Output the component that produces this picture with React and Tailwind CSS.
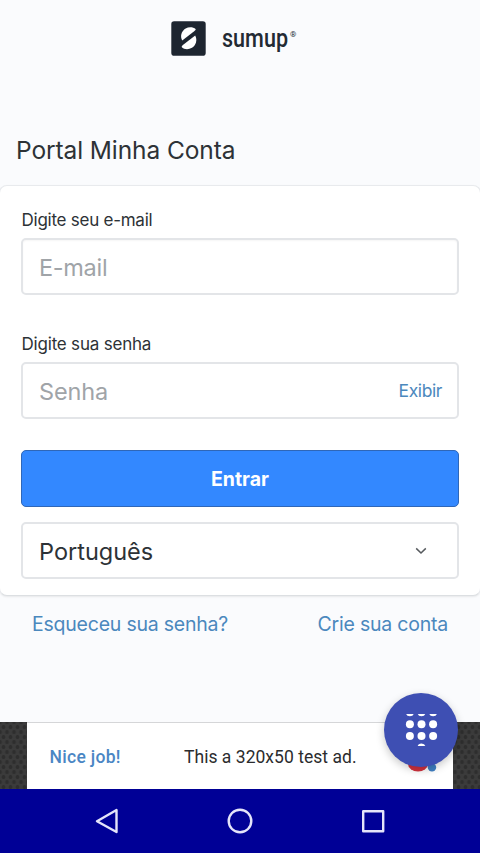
function Logo() {
  return (
    <svg viewBox="0 0 140 44" className="block h-[44px] w-[140px] overflow-visible" role="img" aria-label="sumup">
      <rect x="1.3" y="4.3" width="34.4" height="34.4" rx="2.8" fill="#1d2530" />
      <path d="M12.2 23.4 C9.8 19.4 11.4 14.2 15.6 11.6 C18.8 9.7 23 9.9 25.8 12.2 C25.6 12.8 25 13.5 24.2 14.2 Z" fill="#fff" />
      <path d="M25.2 18.4 C27.6 22.6 26 28.2 22 30.8 C18.4 32.9 14.2 32.7 11.6 30 C11.7 29.4 12.3 28.6 13.2 27.8 Z" fill="#fff" />
      <text
        x="52"
        y="29.5"
        fontSize="26"
        textLength="66"
        lengthAdjust="spacingAndGlyphs"
        fill="#222a33"
        className="font-['Roboto',sans-serif] font-medium"
      >
        sumup
      </text>
      <text x="120" y="20.2" fontSize="8" fill="#222a33" className="font-['Roboto',sans-serif]">
        ®
      </text>
    </svg>
  );
}

function AdBanner() {
  return (
    <div className="flex h-[67px] justify-center bg-[#3b3b3b] bg-[radial-gradient(circle,#2e2e2e_1.6px,transparent_2.2px),radial-gradient(circle,#2e2e2e_1.6px,transparent_2.2px)] bg-[size:7px_10px] bg-[position:0_0,3.5px_5px]">
      <div className="flex w-[426px] items-center border-t border-[#d5d6d8] bg-white pt-[2px] pl-[22.5px] font-['Roboto',sans-serif]">
        <span className="w-[134.5px] text-[17.5px] font-medium tracking-[0.3px] whitespace-nowrap text-[#4a86c4]">Nice job!</span>
        <span className="text-[17.5px] tracking-[0.03px] whitespace-nowrap text-[#2b2c2e]">This a 320x50 test ad.</span>
      </div>
    </div>
  );
}

function DialButton() {
  return (
    <div className="absolute top-[693px] left-[384px]">
      <svg viewBox="0 0 80 90" className="absolute top-0 left-0 h-[90px] w-[80px]">
        <ellipse cx="34" cy="71" rx="10" ry="7.5" fill="#d4323e" />
        <circle cx="48" cy="74.4" r="4.2" fill="#3f80c4" />
      </svg>
      <button className="relative flex size-[74px] items-center justify-center rounded-full bg-[#3e4fb3] shadow-[0_3px_8px_rgba(0,0,0,0.22)]">
        <svg viewBox="0 0 74 74" className="size-[74px]" fill="#fff">
          <clipPath id="pad">
            <rect x="20" y="21" width="35" height="32" />
          </clipPath>
          <g clipPath="url(#pad)">
            {[25.9, 37.5, 49.1].map((x) => (
              <g key={x}>
                <circle cx={x} cy="19.3" r="4" />
                <circle cx={x} cy="31.3" r="4" />
                <circle cx={x} cy="42.9" r="4" />
              </g>
            ))}
            <circle cx="37.5" cy="54.5" r="4" />
          </g>
        </svg>
      </button>
    </div>
  );
}

function NavBar() {
  return (
    <nav className="h-[64px] bg-[#000096]">
      <svg viewBox="0 0 480 64" className="h-[64px] w-[480px]" fill="none" stroke="#e4e4fa" strokeWidth="2.4" strokeLinejoin="round">
        <path d="M116.5 21 V43 L97 32.2 Z" />
        <circle cx="240" cy="32" r="11.3" />
        <rect x="363.2" y="22.2" width="20" height="20" />
      </svg>
    </nav>
  );
}

export default function App() {
  return (
    <div className="relative flex h-[853px] w-[480px] flex-col overflow-hidden bg-[#fafbfd] font-['Inter',sans-serif] text-[#2d3236]">
      <header className="flex h-[115px] justify-center pt-[17px]">
        <div className="w-[140px]">
          <Logo />
        </div>
      </header>
      <h1 className="flex h-[70px] items-center pl-[16px] text-[24.5px] tracking-[-0.1px]">Portal Minha Conta</h1>
      <main className="-mx-px h-[411px] rounded-[8px] border border-[#e8eaed] border-b-[#dcdfe2] bg-white px-[21px] pt-[22px] shadow-[0_1px_2px_rgba(0,0,0,0.08)]">
        <label className="block h-[30px] pl-[0.5px] text-[17px] leading-[24px] tracking-[-0.25px]">Digite seu e-mail</label>
        <div className="flex h-[57px] items-center rounded-[5px] border-2 border-[#e3e5e8] px-[16px] pt-[3px] text-[23.5px] tracking-[-0.3px] text-[#a0a4a8] shadow-[inset_0_1px_2px_rgba(0,0,0,0.04)]">E-mail</div>
        <label className="mt-[37px] block h-[30px] pl-[0.5px] text-[17px] leading-[24px] tracking-[-0.2px]">Digite sua senha</label>
        <div className="flex h-[57px] items-center justify-between rounded-[5px] border-2 border-[#e3e5e8] pr-[15px] pl-[16px] text-[23.5px] tracking-[-0.15px] text-[#a0a4a8]">
          <span className="pt-[3px]">Senha</span>
          <span className="pt-px text-[17.5px] tracking-[-0.4px] text-[#4b88bd]">Exibir</span>
        </div>
        <button className="mt-[31px] flex h-[57px] w-full items-center justify-center rounded-[5px] border border-[#2f67b8] bg-[#3388ff] pt-[2px] text-[19.5px] font-bold text-white">Entrar</button>
        <div className="mt-[15px] flex h-[57px] items-center justify-between rounded-[5px] border-2 border-[#e3e5e8] pr-[30px] pl-[16px] text-[23.5px]">
          <span className="pt-[3px]">Português</span>
          <svg viewBox="0 0 12 8" className="h-[8px] w-[12px]" fill="none" stroke="#565a5e" strokeWidth="1.5">
            <path d="M1.2 1.4 L6 6 L10.8 1.4" />
          </svg>
        </div>
      </main>
      <div className="flex h-[126px] justify-between pt-[15px] pr-[32px] pl-[32px] text-[19.5px] leading-[27px] tracking-[-0.22px] text-[#4b88bd]">
        <a>Esqueceu sua senha?</a>
        <a>Crie sua conta</a>
      </div>
      <AdBanner />
      <NavBar />
      <DialButton />
    </div>
  );
}
